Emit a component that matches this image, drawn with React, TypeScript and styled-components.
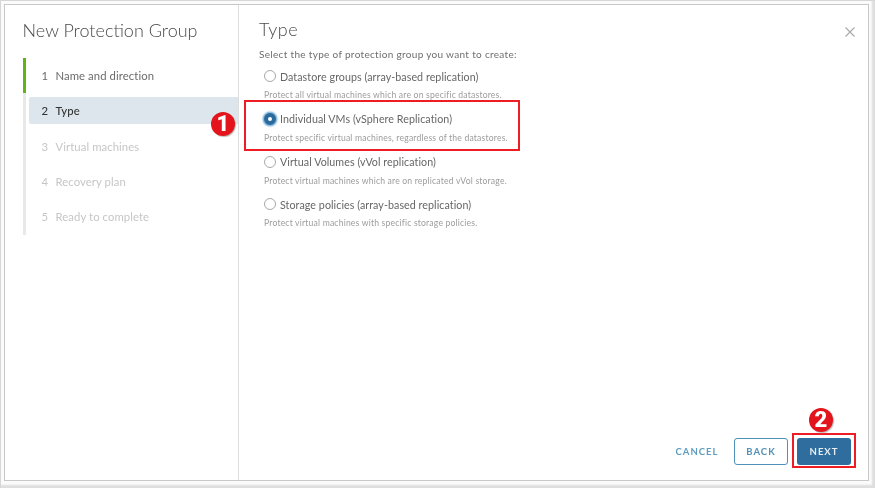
import React from "react";
import styled, { createGlobalStyle } from "styled-components";

const Global = createGlobalStyle`
  html, body { margin: 0; padding: 0; background: #fff; }
  #root { width: 875px; height: 488px; }
  * { box-sizing: border-box; }
`;

const Page = styled.div`
  position: relative;
  width: 875px;
  height: 488px;
  padding: 4px 6px 7px 4px;
  background: #fbfbfb;
  box-shadow: inset 1px 1px 0 #d6d6d6, inset -3px -3px 2px #dedede;
  font-family: Lato, "Noto Sans", sans-serif;
  filter: blur(0.35px);
`;

const Dialog = styled.div`
  position: relative;
  display: flex;
  width: 100%;
  height: 100%;
  background: #fff;
  border: 1.5px solid #c8c8c8;
`;

const Sidebar = styled.aside`
  flex: 0 0 233.5px;
  border-right: 1px solid #dedede;
  padding: 15px 0 0 17.5px;
`;

const DialogTitle = styled.h1`
  margin: 0;
  height: 38px;
  font-size: 18px;
  line-height: 20px;
  font-weight: 300;
  color: #4a4a4a;
  white-space: nowrap;
`;

const Steps = styled.ol`
  list-style: none;
  margin: 0;
  padding: 0 0 5px 3px;
  width: 100%;
  border-left: 3px solid #e8e8e8;
  position: relative;
  display: flex;
  flex-direction: column;
  &::before {
    content: "";
    position: absolute;
    left: -3px;
    top: 0;
    width: 3px;
    height: 35px;
    background: #60b515;
  }
`;

const Step = styled.li<{ $state: "done" | "active" | "todo" }>`
  display: flex;
  align-items: center;
  height: 27px;
  margin-top: ${(p) => (p.$state === "done" ? "4px" : "0")};
  margin-bottom: 8.25px;
  padding-left: 13px;
  font-size: 11.3px;
  letter-spacing: 0.08px;
  border-radius: 2px 0 0 2px;
  background: ${(p) => (p.$state === "active" ? "#dde6ed" : "transparent")};
  color: ${(p) =>
    p.$state === "active" ? "#333" : p.$state === "done" ? "#6b6b6b" : "#c6c6c6"};
  font-weight: ${(p) => (p.$state === "active" ? 500 : 400)};
  &:last-child {
    margin-bottom: 0;
  }
`;

const StepNumber = styled.span`
  flex: 0 0 14px;
`;

const Content = styled.main`
  flex: 1;
  position: relative;
  display: flex;
  flex-direction: column;
  padding: 13px 17px 15px 20.5px;
`;

const ContentTitle = styled.h2`
  margin: 0;
  height: 29px;
  font-size: 18px;
  line-height: 22px;
  font-weight: 300;
  letter-spacing: 0.5px;
  color: #4a4a4a;
`;

const Intro = styled.p`
  margin: 0 0 6px;
  height: 14px;
  font-size: 10px;
  line-height: 14px;
  letter-spacing: 0.32px;
  color: #6e6e6e;
`;

const Options = styled.div`
  flex: 1;
  display: flex;
  flex-direction: column;
  padding-left: 5px;
`;

const Option = styled.label`
  display: block;
  height: 42.8px;
`;

const OptionRow = styled.span`
  display: flex;
  align-items: center;
  gap: 4px;
  height: 18px;
  font-size: 10.7px;
  letter-spacing: 0.06px;
  color: #666;
`;

const Radio = styled.span<{ $checked?: boolean }>`
  flex: 0 0 12px;
  width: 12px;
  height: 12px;
  border-radius: 50%;
  background: #fff;
  border: ${(p) => (p.$checked ? "4px solid #2a6b9e" : "1px solid #a8a8a8")};
  box-shadow: ${(p) => (p.$checked ? "0 0 1.5px 1.5px #7fb2d8" : "none")};
`;

const OptionHint = styled.span`
  display: block;
  margin-top: 4px;
  font-size: 8.6px;
  line-height: 12px;
  letter-spacing: 0.19px;
  color: #9c9c9c;
`;

const Footer = styled.footer`
  display: flex;
  justify-content: flex-end;
  align-items: center;
  gap: 14px;
  height: 28px;
`;

const BaseButton = styled.button`
  height: 27px;
  border-radius: 3px;
  font-family: inherit;
  font-size: 9.5px;
  font-weight: 700;
  letter-spacing: 1px;
  text-transform: uppercase;
`;

const CancelButton = styled(BaseButton)`
  border: 0;
  background: none;
  padding: 0;
  width: 46px;
  color: #5e9cc0;
`;

const BackButton = styled(BaseButton)`
  width: 54px;
  border: 1px solid #4f91b8;
  background: #fff;
  color: #4f91b8;
`;

const NextButton = styled(BaseButton)`
  width: 54px;
  margin-left: -5px;
  border: 0;
  background: #2e6d9e;
  color: #e6eef4;
`;

const CloseIcon = styled.svg`
  position: absolute;
  top: 21px;
  right: 12.5px;
  width: 12px;
  height: 12px;
  color: #a8a8a8;
`;

const Highlight = styled.div<{ $x: number; $y: number; $w: number; $h: number }>`
  position: absolute;
  left: ${(p) => p.$x}px;
  top: ${(p) => p.$y}px;
  width: ${(p) => p.$w}px;
  height: ${(p) => p.$h}px;
  border: 2px solid #ee1c25;
`;

const Badge = styled.div<{ $x: number; $y: number }>`
  position: absolute;
  left: ${(p) => p.$x}px;
  top: ${(p) => p.$y}px;
  width: 24px;
  height: 24px;
  border-radius: 50%;
  background: #e3141c;
  box-shadow: 1px 1px 1px #bbb;
  color: #fff;
  display: flex;
  align-items: center;
  justify-content: center;
  font-family: Roboto, Arial, sans-serif;
  font-weight: 900;
  font-size: 22px;
  line-height: 1;
`;

const steps: { n: number; label: string; state: "done" | "active" | "todo" }[] = [
  { n: 1, label: "Name and direction", state: "done" },
  { n: 2, label: "Type", state: "active" },
  { n: 3, label: "Virtual machines", state: "todo" },
  { n: 4, label: "Recovery plan", state: "todo" },
  { n: 5, label: "Ready to complete", state: "todo" },
];

const options = [
  { label: "Datastore groups (array-based replication)", hint: "Protect all virtual machines which are on specific datastores." },
  { label: "Individual VMs (vSphere Replication)", hint: "Protect specific virtual machines, regardless of the datastores.", checked: true },
  { label: "Virtual Volumes (vVol replication)", hint: "Protect virtual machines which are on replicated vVol storage." },
  { label: "Storage policies (array-based replication)", hint: "Protect virtual machines with specific storage policies." },
];

export default function App() {
  return (
    <Page>
      <Global />
      <Dialog>
        <Sidebar>
          <DialogTitle>New Protection Group</DialogTitle>
          <Steps>
            {steps.map((s) => (
              <Step key={s.n} $state={s.state}>
                <StepNumber>{s.n}</StepNumber>
                {s.label}
              </Step>
            ))}
          </Steps>
        </Sidebar>
        <Content>
          <ContentTitle>Type</ContentTitle>
          <Intro>Select the type of protection group you want to create:</Intro>
          <Options>
            {options.map((o) => (
              <Option key={o.label}>
                <OptionRow>
                  <Radio $checked={o.checked} />
                  {o.label}
                </OptionRow>
                <OptionHint>{o.hint}</OptionHint>
              </Option>
            ))}
          </Options>
          <Footer>
            <CancelButton>Cancel</CancelButton>
            <BackButton>Back</BackButton>
            <NextButton>Next</NextButton>
          </Footer>
          <CloseIcon viewBox="0 0 12 12" fill="none" stroke="currentColor" strokeWidth="1.1">
            <path d="M1.5 1.5l9 9M10.5 1.5l-9 9" />
          </CloseIcon>
        </Content>
      </Dialog>
      <Highlight $x={244} $y={100} $w={276} $h={51} />
      <Highlight $x={792} $y={433} $w={64} $h={35} />
      <Badge $x={211} $y={112}>1</Badge>
      <Badge $x={809} $y={408}>2</Badge>
    </Page>
  );
}
